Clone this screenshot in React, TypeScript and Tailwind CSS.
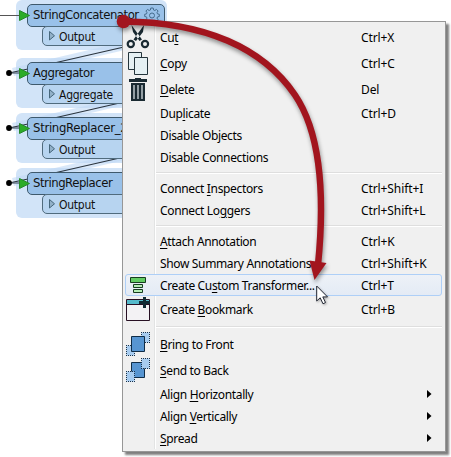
import React from "react";

type Item = { before?: string; key?: string; after: string; shortcut?: string; icon?: React.ReactNode; submenu?: boolean; active?: boolean };

const Scissors = () => (
  <svg width="24" height="26" viewBox="0 0 24 26" fill="none">
    <path d="M5.500 1 L7 8 L13.500 17 L16 15.500 Z M18 1 L17 8 L10 17 L7.500 15.500 Z" fill="#1a2a32" />
    <circle cx="4.800" cy="20" r="3.100" stroke="#1a2a32" strokeWidth="2.200" />
    <circle cx="19" cy="20" r="3.100" stroke="#1a2a32" strokeWidth="2.200" />
    <circle cx="12" cy="13" r="1" fill="#dce4e7" />
  </svg>
);
const Copy = () => (
  <svg width="24" height="26" viewBox="0 0 24 26" fill="#e5f0f3" stroke="#24343b">
    <path d="M2.500 2.500H15.500V19.500H2.500Z" />
    <path d="M8.500 7.500H21.500V24.500H8.500Z" />
  </svg>
);
const Trash = () => (
  <svg width="24" height="26" viewBox="0 0 24 26">
    <path d="M9 2H15V3H21V6H3V3H9ZM5 7H19V25H5Z" fill="#1a2a32" />
    <path d="M8 9V23M12 9V23M16 9V23" stroke="#9aa5aa" strokeWidth="1.900" />
  </svg>
);
const Transformer = () => (
  <svg width="24" height="22" viewBox="0 0 24 22" stroke="#173d20">
    <path d="M4.500 3.500H19.500V8.500H4.500Z" fill="#62cc62" />
    <path d="M7.500 10.500H16.500V13.500H7.500ZM7.500 15.500H16.500V18.500H7.500Z" fill="#b4edb5" />
  </svg>
);
const Bookmark = () => (
  <svg width="26" height="26" viewBox="0 0 26 26">
    <path d="M.500 3.500H23.500V24.500H.500Z" fill="#f3f2f4" stroke="#271023" />
    <path d="M1 4H23V8H1Z" fill="#55bacb" />
    <path d="M0 8.500H24" stroke="#271023" />
    <path d="M18.500 1V12M13 6.500H24" stroke="#102a33" strokeWidth="3" />
  </svg>
);
const Stack = ({ back = false }: { back?: boolean }) => {
  const main = <path d="M5.500 5.500H18.500V20.500H5.500Z" fill="#5795d1" stroke="#102d47" />;
  return (
    <svg width="26" height="26" viewBox="0 0 26 26">
      {back && main}
      <path d="M15.500 1.500H23.500V11.500H15.500ZM.500 14.500H8.500V24.500H.500Z" fill="#a7ccf0" />
      <path d="M15 1.500H24M15 11.500H24M15.500 1V12M23.500 1V12M0 14.500H9M0 24.500H9M.500 14V25M8.500 14V25" stroke="#17324c" strokeDasharray="1 1" />
      {!back && main}
    </svg>
  );
};

const groups: Item[][] = [
  [
    { before: "Cu", key: "t", after: "", shortcut: "Ctrl+X", icon: <Scissors /> },
    { key: "C", after: "opy", shortcut: "Ctrl+C", icon: <Copy /> },
    { key: "D", after: "elete", shortcut: "Del", icon: <Trash /> },
    { before: "Dup", key: "l", after: "icate", shortcut: "Ctrl+D" },
    { after: "Disable Objects" },
    { after: "Disable Connections" },
  ],
  [
    { before: "Connect ", key: "I", after: "nspectors", shortcut: "Ctrl+Shift+I" },
    { before: "Connect Lo", key: "g", after: "gers", shortcut: "Ctrl+Shift+L" },
  ],
  [
    { key: "A", after: "ttach Annotation", shortcut: "Ctrl+K" },
    { after: "Show Summary Annotations", shortcut: "Ctrl+Shift+K" },
    { before: "Create Cu", key: "s", after: "tom Transformer...", shortcut: "Ctrl+T", icon: <Transformer />, active: true },
    { before: "Create ", key: "B", after: "ookmark", shortcut: "Ctrl+B", icon: <Bookmark /> },
  ],
  [
    { key: "B", after: "ring to Front", icon: <Stack /> },
    { key: "S", after: "end to Back", icon: <Stack back /> },
    { before: "Align ", key: "H", after: "orizontally", submenu: true },
    { before: "Align ", key: "V", after: "ertically", submenu: true },
    { key: "S", after: "pread", submenu: true },
  ],
];

function MenuRow({ item }: { item: Item }) {
  const tall = item.icon && !item.active;
  return (
    <div className={`relative mr-px flex items-center rounded-[3px] border pr-[9px] ${tall ? "h-[26px]" : "h-[22px]"} ${item.active ? "border-[#aecff7] bg-linear-to-b from-[#edf1f7] to-[#e4ebf5]" : "border-transparent"}`}>
      <span className="flex w-[34px] shrink-0">{item.icon}</span>
      <span className="w-[201px] shrink-0 pt-[2px] tracking-[-0.35px] whitespace-pre">
        {item.before}{item.key && <span className="underline decoration-1 underline-offset-[2px]">{item.key}</span>}{item.after}
      </span>
      <span className="pt-[2px] whitespace-pre">{item.shortcut}</span>
      {item.submenu && <svg className="ml-auto" width="5" height="8" viewBox="0 0 5 8"><path d="M0 0L4.500 4L0 8Z" /></svg>}
    </div>
  );
}

const nodes = [
  { y: 0, name: "StringConcatenator", port: "Output" },
  { y: 58, name: "Aggregator", port: "Aggregate" },
  { y: 113, name: "StringReplacer_2", port: "Output" },
  { y: 168, name: "StringReplacer", port: "Output" },
];

function Node({ y, name, port }: { y: number; name: string; port: string }) {
  return (
    <div className="absolute left-[27px] w-[138px] text-[#111]" style={{ top: y + 4 }}>
      <div className={`flex h-[23px] items-center rounded-[5px] border border-[#3e596c] bg-[#99c1e9] pb-px pl-[5px] text-[13px] whitespace-nowrap ${name.includes("_") ? "tracking-[-0.3px]" : "tracking-[-0.47px]"}`}>{name}</div>
      <div className="-mt-px ml-[15px] flex h-5 items-center gap-[4px] rounded-[5px] border border-[#506b7d] bg-[#b7d4f0] pl-[6px] text-[12px] tracking-[-0.25px]">
        <svg width="6" height="10" viewBox="0 0 6 10"><path d="M.5.5V9L5.500 4.800Z" fill="#91b0c8" stroke="#47677b" /></svg>
        <span className="pt-[2px]">{port}</span>
      </div>
      <svg className="absolute -left-2 top-[6px]" width="12" height="12" viewBox="0 0 12 12"><path d="M.5.5V10.500L10.500 5.500Z" fill="#2cac28" stroke="#258829" /></svg>
    </div>
  );
}

export default function App() {
  return (
    <div className="relative h-[457px] w-[451px] overflow-hidden bg-white">
      <div className="font-['DejaVu_Sans_Condensed','DejaVu_Sans',sans-serif] [font-stretch:condensed]">
        {nodes.map((n) => <div key={n.name} className="absolute left-4 h-[50px] w-[151px] rounded-[6px] bg-[#d2e4f8]" style={{ top: n.y }} />)}
        <svg className="absolute inset-0" width="170" height="220" fill="none">
          {[73, 128, 183].map((y) => (
            <g key={y}>
              <path d={`M13 ${y - 1}L124 ${y - 27}`} stroke="#bfd9f5" strokeOpacity=".6" strokeWidth="8" />
              <path d={`M9 ${y}L28 ${y - 4}L124 ${y - 26}`} stroke="#2a343e" strokeWidth="1.1" />
              <path d={`M9 ${y}H24`} stroke="#33414e" />
              <circle cx="9" cy={y} r="2.900" fill="#000" />
            </g>
          ))}
          <path d="M0 15.500H22" stroke="#555" />
        </svg>
        {nodes.map((n) => <Node key={n.name} {...n} />)}
        <svg className="absolute left-[144px] top-[7px]" width="16" height="16" viewBox="0 0 16 16" fill="none" stroke="#456b8d">
          <path d="M6.800 1h2.400l.4 2 1.200.5 1.700-1.100 1.600 1.600-1.100 1.700.5 1.200 1.800.4v2.200l-1.800.4-.5 1.200 1.100 1.700-1.600 1.600-1.700-1.100-1.200.5-.4 1.700H6.800l-.4-1.700-1.200-.5-1.700 1.100-1.600-1.600L3 11.100l-.5-1.200-1.800-.4V7.300l1.800-.4L3 5.700 1.900 4l1.600-1.600 1.700 1.100L6.400 3Z" />
          <circle cx="8" cy="8.500" r="2.500" />
        </svg>
      </div>

      <div className="absolute left-[122px] top-[21px] flex h-[431px] w-[324px] flex-col border border-[#979797] bg-[#f0f0f0] p-[2px] font-['Noto_Sans','Open_Sans',sans-serif] text-[12px] leading-none tracking-[-0.1px] text-black shadow-[3px_3px_2px_rgba(0,0,0,0.5)]">
        <div className="absolute bottom-[2px] left-[31px] top-[2px] w-[2px] border-l border-[#e2e3e3] bg-white" />
        {groups.map((group, i) => (
          <React.Fragment key={i}>
            {i > 0 && <div className="ml-[31px] mr-px flex h-[9px] items-center"><div className="h-[2px] w-full border-t border-[#dedede] bg-white" /></div>}
            {group.map((item) => <MenuRow key={item.after + item.key} item={item} />)}
          </React.Fragment>
        ))}
      </div>

      <svg className="absolute inset-0 drop-shadow-[1px_3px_2px_rgba(0,0,0,0.4)]" width="451" height="457">
        <path d="M123 21.500C205 22 263 48 295 95C320 132 325 195 318 265" fill="none" stroke="#a2151e" strokeWidth="6.500" />
        <circle cx="123.500" cy="21.500" r="6.800" fill="#a2151e" />
        <path d="M309.500 260.500L326.500 263L314.500 280Z" fill="#a2151e" />
      </svg>
      <svg className="absolute left-[316px] top-[285px] drop-shadow-[1px_1px_1px_rgba(0,0,0,0.3)]" width="14" height="21" viewBox="0 0 14 21">
        <path d="M.7 1V16L4.200 12.800L7 18.800L9.500 17.500L6.800 11.900H11.500Z" fill="white" stroke="#222733" />
      </svg>
    </div>
  );
}
